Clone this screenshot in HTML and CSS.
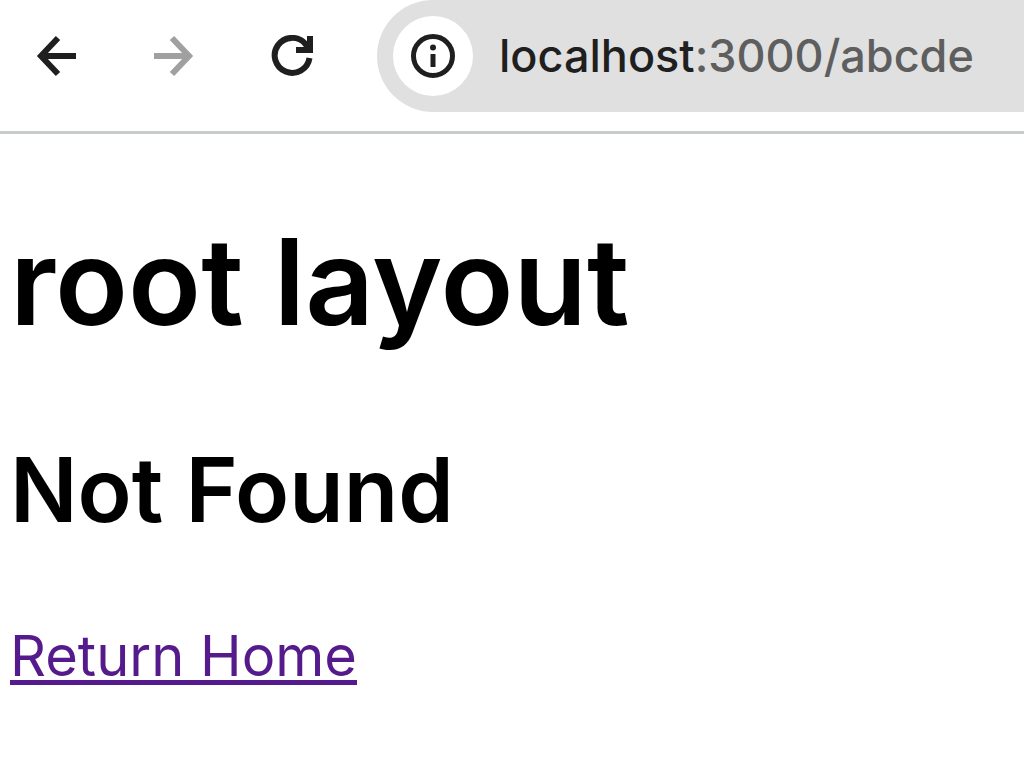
FILE: index.html
```html
<!DOCTYPE html>
<html lang="en">
<head>
    <meta charset="UTF-8">
    <meta name="viewport" content="width=device-width, initial-scale=1.0">
    <title>Not Found</title>
    <link rel="stylesheet" href="styles.css">
</head>
<body>
    <header class="toolbar">
        <nav class="navButtons">
            <button type="button" aria-label="Back">
                <svg viewBox="0 0 42 42"><path d="M41 21H6M23 3L6 21l17 18"/></svg>
            </button>
            <button type="button" class="forward" aria-label="Forward" disabled>
                <svg viewBox="0 0 42 42"><path d="M1 21h35M19 3l17 18-17 18"/></svg>
            </button>
            <button type="button" aria-label="Reload">
                <svg viewBox="0 0 42 42"><path d="M38.500 23A17.500 17.500 0 1 1 34.500 9L38 14M39 1v14H25"/></svg>
            </button>
        </nav>
        <div class="addressBar">
            <button type="button" class="siteInfo" aria-label="Site information">
                <svg viewBox="0 0 44 44"><circle cx="22" cy="22" r="19.500"/><path d="M22 20v13"/><circle class="dot" cx="22" cy="13.500" r="3"/></svg>
            </button>
            <a class="url" href="#">localhost<span>:3000/abcde</span></a>
        </div>
    </header>
    <main>
        <h1>root layout</h1>
        <h2>Not Found</h2>
        <a class="home" href="#">Return Home</a>
    </main>
</body>
</html>
```

FILE: styles.css
```css
* {
    box-sizing: border-box;
}

body {
    margin: 0;
    background: white;
    color: black;
    font-family: Inter, sans-serif;
}

button {
    padding: 0;
    border: none;
    background: none;
    color: #1f1f1f;
    cursor: pointer;
}

svg {
    display: block;
    width: 42px;
    height: 42px;
    fill: none;
    stroke: currentColor;
    stroke-width: 6;
}

.toolbar {
    display: flex;
    height: 134px;
    border-bottom: 3px solid #c7cbc9;
    overflow: hidden;
}

.navButtons {
    display: flex;
    flex: none;
    align-items: center;
    gap: 76px;
    height: 112px;
    padding: 0 64px 0 35px;
}

.forward {
    color: #a0a0a0;
}

.addressBar {
    display: flex;
    flex: 1;
    align-items: center;
    gap: 26px;
    height: 112px;
    padding-left: 16px;
    border-radius: 56px 0 0 56px;
    background: #e0e0e0;
}

.siteInfo {
    display: flex;
    flex: none;
    align-items: center;
    justify-content: center;
    width: 80px;
    height: 80px;
    border-radius: 50%;
    background: white;
}

.siteInfo svg {
    width: 44px;
    height: 44px;
    stroke-width: 5;
}

.dot {
    fill: currentColor;
    stroke: none;
}

.url {
    color: #1f1f1f;
    font-size: 45px;
    font-weight: 500;
    line-height: 56px;
    text-decoration: none;
    white-space: nowrap;
}

.url span {
    color: #5e5e5e;
}

main {
    padding: 76px 10px;
}

h1,
h2 {
    margin: 0;
    font-weight: 600;
}

h1 {
    margin-bottom: 80px;
    font-size: 120px;
    line-height: 144px;
}

h2 {
    margin-bottom: 74px;
    font-size: 89px;
    line-height: 112px;
}

.home {
    display: inline-block;
    color: #551a8b;
    font-size: 56px;
    font-weight: 400;
    line-height: 72px;
    text-decoration-thickness: 5px;
    text-underline-offset: 4px;
}
```
